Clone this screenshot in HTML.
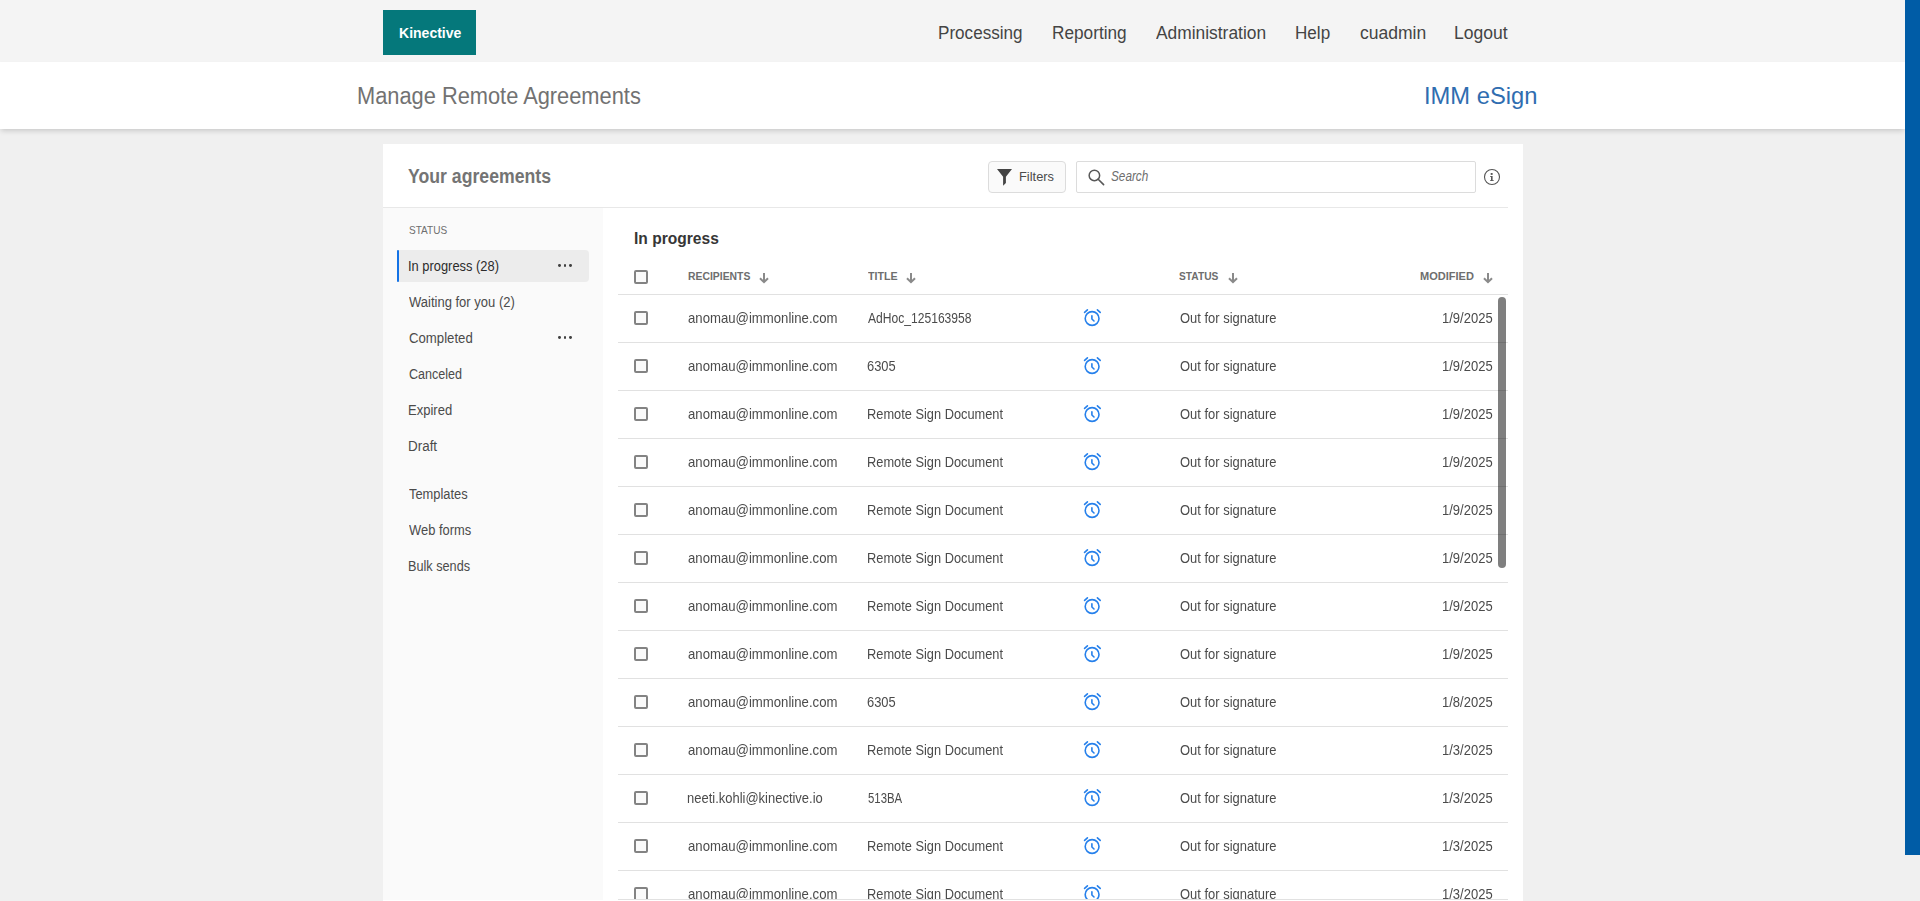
<!DOCTYPE html>
<html><head><meta charset="utf-8"><title>Manage Remote Agreements</title>
<style>
html,body{margin:0;padding:0;}
body{width:1920px;height:901px;overflow:hidden;background:#f0f0f0;position:relative;font-family:"Liberation Sans",sans-serif;}
.t{position:absolute;white-space:nowrap;line-height:1;}
.r{position:absolute;}
.clip{position:absolute;overflow:hidden;will-change:transform;}
</style></head><body>
<div class="r" style="left:0px;top:0px;width:1905px;height:62px;background:#f4f4f4;"></div>
<div class="r" style="left:0px;top:62px;width:1905px;height:67px;background:#ffffff;box-shadow:0 3px 5px -1px rgba(0,0,0,0.16);z-index:2;"></div>
<div class="r" style="left:1905px;top:0px;width:15px;height:855px;background:#005ca6;z-index:5;"></div>
<div class="r" style="left:383px;top:10px;width:93px;height:45px;background:#05787b;"></div>
<div class="t" style="top:24px;line-height:17px;font-size:15.5px;color:#ffffff;font-weight:bold;transform:scaleX(0.9050);transform-origin:left center;left:398.59px;z-index:3;">Kinective</div>
<div class="t" style="top:23px;line-height:20px;font-size:17.5px;color:#444444;transform:scaleX(0.9774);transform-origin:left center;left:938.23px;">Processing</div>
<div class="t" style="top:23px;line-height:20px;font-size:17.5px;color:#444444;transform:scaleX(0.9836);transform-origin:left center;left:1051.82px;">Reporting</div>
<div class="t" style="top:23px;line-height:20px;font-size:17.5px;color:#444444;transform:scaleX(0.9927);transform-origin:left center;left:1156.20px;">Administration</div>
<div class="t" style="top:23px;line-height:20px;font-size:17.5px;color:#444444;transform:scaleX(0.9764);transform-origin:left center;left:1295.03px;">Help</div>
<div class="t" style="top:23px;line-height:20px;font-size:17.5px;color:#444444;transform:scaleX(1.0016);transform-origin:left center;left:1359.50px;">cuadmin</div>
<div class="t" style="top:23px;line-height:20px;font-size:17.5px;color:#444444;transform:scaleX(1.0019);transform-origin:left center;left:1453.80px;">Logout</div>
<div class="t" style="top:83px;line-height:26px;font-size:23.5px;color:#727272;transform:scaleX(0.9284);transform-origin:left center;left:356.84px;z-index:3;">Manage Remote Agreements</div>
<div class="t" style="top:82px;line-height:27px;font-size:24px;color:#2f6db0;transform:scaleX(0.9892);transform-origin:left center;left:1424.22px;z-index:3;">IMM eSign</div>
<div class="r" style="left:383px;top:144px;width:1140px;height:757px;background:#ffffff;"></div>
<div class="r" style="left:383px;top:207px;width:1125px;height:1px;background:#e8e8e8;"></div>
<div class="t" style="top:165px;line-height:22px;font-size:19.5px;color:#747474;font-weight:bold;transform:scaleX(0.9062);transform-origin:left center;left:408.39px;">Your agreements</div>
<div class="r" style="left:988px;top:161px;width:78px;height:32px;background:#fafafa;box-sizing:border-box;border:1px solid #dcdcdc;border-radius:4px;"></div>
<svg class="r" style="left:996px;top:168px" width="18" height="19" viewBox="0 0 18 19"><path d="M1 1.1 H16 L9.9 8.8 V14.9 L7.1 17.7 V8.8 Z" fill="#444"/></svg>
<div class="t" style="top:169px;line-height:15px;font-size:13.5px;color:#4b4b4b;transform:scaleX(0.9517);transform-origin:left center;left:1019.45px;">Filters</div>
<div class="r" style="left:1076px;top:161px;width:400px;height:32px;background:#ffffff;box-sizing:border-box;border:1px solid #dcdcdc;border-radius:2px;"></div>
<svg class="r" style="left:1086px;top:167px" width="20" height="20" viewBox="0 0 20 20"><circle cx="8.4" cy="8.4" r="5.25" fill="none" stroke="#585858" stroke-width="1.5"/><path d="M12.2 12.2 L17.6 17.6" stroke="#585858" stroke-width="1.6" stroke-linecap="round"/></svg>
<div class="t" style="top:168px;line-height:16px;font-size:14px;color:#6e6e6e;font-style:italic;transform:scaleX(0.8410);transform-origin:left center;left:1111.36px;">Search</div>
<svg class="r" style="left:1483px;top:168px" width="18" height="18" viewBox="0 0 18 18"><circle cx="9" cy="9" r="7.5" fill="none" stroke="#555" stroke-width="1.1"/><rect x="7.7" y="5" width="1.9" height="1.9" fill="#555"/><path d="M7 8 H9.6 V12.2 H10.8 V13 H7 V12.2 H8 V8.8 H7 Z" fill="#555"/></svg>
<div class="r" style="left:383px;top:208px;width:220px;height:692px;background:#fafafa;"></div>
<div class="t" style="top:224px;line-height:12px;font-size:11.5px;color:#6e6e6e;transform:scaleX(0.8735);transform-origin:left center;left:408.76px;">STATUS</div>
<div class="r" style="left:397px;top:250px;width:192px;height:32px;background:#ececec;border-radius:0 4px 4px 0;"></div>
<div class="r" style="left:397px;top:250px;width:2px;height:32px;background:#1473e6;border-radius:1px;"></div>
<div class="t" style="top:258px;line-height:16px;font-size:14px;color:#2c2c2c;transform:scaleX(0.9204);transform-origin:left center;left:408.00px;">In progress (28)</div>
<div class="t" style="top:294px;line-height:16px;font-size:14px;color:#4b4b4b;transform:scaleX(0.9291);transform-origin:left center;left:409.11px;">Waiting for you (2)</div>
<div class="t" style="top:330px;line-height:16px;font-size:14px;color:#4b4b4b;transform:scaleX(0.9410);transform-origin:left center;left:408.54px;">Completed</div>
<div class="t" style="top:366px;line-height:16px;font-size:14px;color:#4b4b4b;transform:scaleX(0.8976);transform-origin:left center;left:408.57px;">Canceled</div>
<div class="t" style="top:402px;line-height:16px;font-size:14px;color:#4b4b4b;transform:scaleX(0.9297);transform-origin:left center;left:408.18px;">Expired</div>
<div class="t" style="top:438px;line-height:16px;font-size:14px;color:#4b4b4b;transform:scaleX(0.9588);transform-origin:left center;left:408.15px;">Draft</div>
<div class="t" style="top:486px;line-height:16px;font-size:14px;color:#4b4b4b;transform:scaleX(0.9190);transform-origin:left center;left:408.92px;">Templates</div>
<div class="t" style="top:522px;line-height:16px;font-size:14px;color:#4b4b4b;transform:scaleX(0.9222);transform-origin:left center;left:409.11px;">Web forms</div>
<div class="t" style="top:558px;line-height:16px;font-size:14px;color:#4b4b4b;transform:scaleX(0.9058);transform-origin:left center;left:408.20px;">Bulk sends</div>
<div class="r" style="left:558.1px;top:264.3px;width:2.8px;height:2.8px;border-radius:50%;background:#404040"></div>
<div class="r" style="left:563.6px;top:264.3px;width:2.8px;height:2.8px;border-radius:50%;background:#404040"></div>
<div class="r" style="left:569.1px;top:264.3px;width:2.8px;height:2.8px;border-radius:50%;background:#404040"></div>
<div class="r" style="left:558.1px;top:336.3px;width:2.8px;height:2.8px;border-radius:50%;background:#404040"></div>
<div class="r" style="left:563.6px;top:336.3px;width:2.8px;height:2.8px;border-radius:50%;background:#404040"></div>
<div class="r" style="left:569.1px;top:336.3px;width:2.8px;height:2.8px;border-radius:50%;background:#404040"></div>
<div class="t" style="top:229px;line-height:19px;font-size:17px;color:#363636;font-weight:bold;transform:scaleX(0.9163);transform-origin:left center;left:633.79px;">In progress</div>
<div class="r" style="left:634px;top:270px;width:14px;height:14px;box-sizing:border-box;border:2px solid #838383;border-radius:2px;background:#fafafa"></div>
<div class="t" style="top:270px;line-height:12px;font-size:11px;color:#6e6e6e;font-weight:bold;transform:scaleX(0.9445);transform-origin:left center;left:687.74px;">RECIPIENTS</div>
<svg class="r" style="left:759px;top:272px" width="10" height="12" viewBox="0 0 10 12"><path d="M5 1 V10" fill="none" stroke="#8a8a8a" stroke-width="2"/><path d="M1.7 6.9 L5 10.2 L8.3 6.9" fill="none" stroke="#8a8a8a" stroke-width="2" stroke-linecap="square"/></svg>
<div class="t" style="top:270px;line-height:12px;font-size:11px;color:#6e6e6e;font-weight:bold;transform:scaleX(0.9700);transform-origin:left center;left:868.10px;">TITLE</div>
<svg class="r" style="left:906px;top:272px" width="10" height="12" viewBox="0 0 10 12"><path d="M5 1 V10" fill="none" stroke="#8a8a8a" stroke-width="2"/><path d="M1.7 6.9 L5 10.2 L8.3 6.9" fill="none" stroke="#8a8a8a" stroke-width="2" stroke-linecap="square"/></svg>
<div class="t" style="top:270px;line-height:12px;font-size:11px;color:#6e6e6e;font-weight:bold;transform:scaleX(0.9279);transform-origin:left center;left:1179.42px;">STATUS</div>
<svg class="r" style="left:1228px;top:272px" width="10" height="12" viewBox="0 0 10 12"><path d="M5 1 V10" fill="none" stroke="#8a8a8a" stroke-width="2"/><path d="M1.7 6.9 L5 10.2 L8.3 6.9" fill="none" stroke="#8a8a8a" stroke-width="2" stroke-linecap="square"/></svg>
<div class="t" style="top:270px;line-height:12px;font-size:11px;color:#6e6e6e;font-weight:bold;transform:scaleX(1.0019);transform-origin:left center;left:1419.90px;">MODIFIED</div>
<svg class="r" style="left:1483px;top:272px" width="10" height="12" viewBox="0 0 10 12"><path d="M5 1 V10" fill="none" stroke="#8a8a8a" stroke-width="2"/><path d="M1.7 6.9 L5 10.2 L8.3 6.9" fill="none" stroke="#8a8a8a" stroke-width="2" stroke-linecap="square"/></svg>
<div class="r" style="left:618px;top:294px;width:890px;height:1px;background:#e1e1e1;"></div>
<div class="clip" style="left:0;top:295px;width:1920px;height:604px;">
<div class="r" style="left:634px;top:16px;width:14px;height:14px;box-sizing:border-box;border:2px solid #838383;border-radius:2px;background:#fafafa"></div>
<div class="t" style="top:16px;line-height:15px;font-size:13.75px;color:#4b4b4b;transform:scaleX(0.9571);transform-origin:left center;left:687.73px;">anomau@immonline.com</div>
<div class="t" style="top:16px;line-height:15px;font-size:13.75px;color:#4b4b4b;transform:scaleX(0.8792);transform-origin:left center;left:868.00px;">AdHoc_125163958</div>
<svg class="r" style="left:1082px;top:13px" width="21" height="21" viewBox="0 0 21 21"><circle cx="10.1" cy="10.5" r="6.9" fill="none" stroke="#2680eb" stroke-width="1.6"/><path d="M2.6 4.4 L5.4 1.9 M15.4 1.9 L18.2 4.4" stroke="#2680eb" stroke-width="1.6" stroke-linecap="round"/><path d="M9.9 7.7 V11 L12.0 13.0" fill="none" stroke="#2680eb" stroke-width="1.6" stroke-linecap="round" stroke-linejoin="round"/></svg>
<div class="t" style="top:16px;line-height:15px;font-size:13.75px;color:#4b4b4b;transform:scaleX(0.9425);transform-origin:left center;left:1179.63px;">Out for signature</div>
<div class="t" style="top:16px;line-height:15px;font-size:13.75px;color:#4b4b4b;transform:scaleX(0.9459);transform-origin:left center;left:1442.05px;">1/9/2025</div>
<div class="r" style="left:618px;top:47px;width:890px;height:1px;background:#e1e1e1;"></div>
<div class="r" style="left:634px;top:64px;width:14px;height:14px;box-sizing:border-box;border:2px solid #838383;border-radius:2px;background:#fafafa"></div>
<div class="t" style="top:64px;line-height:15px;font-size:13.75px;color:#4b4b4b;transform:scaleX(0.9571);transform-origin:left center;left:687.73px;">anomau@immonline.com</div>
<div class="t" style="top:64px;line-height:15px;font-size:13.75px;color:#4b4b4b;transform:scaleX(0.9386);transform-origin:left center;left:867.34px;">6305</div>
<svg class="r" style="left:1082px;top:61px" width="21" height="21" viewBox="0 0 21 21"><circle cx="10.1" cy="10.5" r="6.9" fill="none" stroke="#2680eb" stroke-width="1.6"/><path d="M2.6 4.4 L5.4 1.9 M15.4 1.9 L18.2 4.4" stroke="#2680eb" stroke-width="1.6" stroke-linecap="round"/><path d="M9.9 7.7 V11 L12.0 13.0" fill="none" stroke="#2680eb" stroke-width="1.6" stroke-linecap="round" stroke-linejoin="round"/></svg>
<div class="t" style="top:64px;line-height:15px;font-size:13.75px;color:#4b4b4b;transform:scaleX(0.9425);transform-origin:left center;left:1179.63px;">Out for signature</div>
<div class="t" style="top:64px;line-height:15px;font-size:13.75px;color:#4b4b4b;transform:scaleX(0.9459);transform-origin:left center;left:1442.05px;">1/9/2025</div>
<div class="r" style="left:618px;top:95px;width:890px;height:1px;background:#e1e1e1;"></div>
<div class="r" style="left:634px;top:112px;width:14px;height:14px;box-sizing:border-box;border:2px solid #838383;border-radius:2px;background:#fafafa"></div>
<div class="t" style="top:112px;line-height:15px;font-size:13.75px;color:#4b4b4b;transform:scaleX(0.9571);transform-origin:left center;left:687.73px;">anomau@immonline.com</div>
<div class="t" style="top:112px;line-height:15px;font-size:13.75px;color:#4b4b4b;transform:scaleX(0.9320);transform-origin:left center;left:866.97px;">Remote Sign Document</div>
<svg class="r" style="left:1082px;top:109px" width="21" height="21" viewBox="0 0 21 21"><circle cx="10.1" cy="10.5" r="6.9" fill="none" stroke="#2680eb" stroke-width="1.6"/><path d="M2.6 4.4 L5.4 1.9 M15.4 1.9 L18.2 4.4" stroke="#2680eb" stroke-width="1.6" stroke-linecap="round"/><path d="M9.9 7.7 V11 L12.0 13.0" fill="none" stroke="#2680eb" stroke-width="1.6" stroke-linecap="round" stroke-linejoin="round"/></svg>
<div class="t" style="top:112px;line-height:15px;font-size:13.75px;color:#4b4b4b;transform:scaleX(0.9425);transform-origin:left center;left:1179.63px;">Out for signature</div>
<div class="t" style="top:112px;line-height:15px;font-size:13.75px;color:#4b4b4b;transform:scaleX(0.9459);transform-origin:left center;left:1442.05px;">1/9/2025</div>
<div class="r" style="left:618px;top:143px;width:890px;height:1px;background:#e1e1e1;"></div>
<div class="r" style="left:634px;top:160px;width:14px;height:14px;box-sizing:border-box;border:2px solid #838383;border-radius:2px;background:#fafafa"></div>
<div class="t" style="top:160px;line-height:15px;font-size:13.75px;color:#4b4b4b;transform:scaleX(0.9571);transform-origin:left center;left:687.73px;">anomau@immonline.com</div>
<div class="t" style="top:160px;line-height:15px;font-size:13.75px;color:#4b4b4b;transform:scaleX(0.9320);transform-origin:left center;left:866.97px;">Remote Sign Document</div>
<svg class="r" style="left:1082px;top:157px" width="21" height="21" viewBox="0 0 21 21"><circle cx="10.1" cy="10.5" r="6.9" fill="none" stroke="#2680eb" stroke-width="1.6"/><path d="M2.6 4.4 L5.4 1.9 M15.4 1.9 L18.2 4.4" stroke="#2680eb" stroke-width="1.6" stroke-linecap="round"/><path d="M9.9 7.7 V11 L12.0 13.0" fill="none" stroke="#2680eb" stroke-width="1.6" stroke-linecap="round" stroke-linejoin="round"/></svg>
<div class="t" style="top:160px;line-height:15px;font-size:13.75px;color:#4b4b4b;transform:scaleX(0.9425);transform-origin:left center;left:1179.63px;">Out for signature</div>
<div class="t" style="top:160px;line-height:15px;font-size:13.75px;color:#4b4b4b;transform:scaleX(0.9459);transform-origin:left center;left:1442.05px;">1/9/2025</div>
<div class="r" style="left:618px;top:191px;width:890px;height:1px;background:#e1e1e1;"></div>
<div class="r" style="left:634px;top:208px;width:14px;height:14px;box-sizing:border-box;border:2px solid #838383;border-radius:2px;background:#fafafa"></div>
<div class="t" style="top:208px;line-height:15px;font-size:13.75px;color:#4b4b4b;transform:scaleX(0.9571);transform-origin:left center;left:687.73px;">anomau@immonline.com</div>
<div class="t" style="top:208px;line-height:15px;font-size:13.75px;color:#4b4b4b;transform:scaleX(0.9320);transform-origin:left center;left:866.97px;">Remote Sign Document</div>
<svg class="r" style="left:1082px;top:205px" width="21" height="21" viewBox="0 0 21 21"><circle cx="10.1" cy="10.5" r="6.9" fill="none" stroke="#2680eb" stroke-width="1.6"/><path d="M2.6 4.4 L5.4 1.9 M15.4 1.9 L18.2 4.4" stroke="#2680eb" stroke-width="1.6" stroke-linecap="round"/><path d="M9.9 7.7 V11 L12.0 13.0" fill="none" stroke="#2680eb" stroke-width="1.6" stroke-linecap="round" stroke-linejoin="round"/></svg>
<div class="t" style="top:208px;line-height:15px;font-size:13.75px;color:#4b4b4b;transform:scaleX(0.9425);transform-origin:left center;left:1179.63px;">Out for signature</div>
<div class="t" style="top:208px;line-height:15px;font-size:13.75px;color:#4b4b4b;transform:scaleX(0.9459);transform-origin:left center;left:1442.05px;">1/9/2025</div>
<div class="r" style="left:618px;top:239px;width:890px;height:1px;background:#e1e1e1;"></div>
<div class="r" style="left:634px;top:256px;width:14px;height:14px;box-sizing:border-box;border:2px solid #838383;border-radius:2px;background:#fafafa"></div>
<div class="t" style="top:256px;line-height:15px;font-size:13.75px;color:#4b4b4b;transform:scaleX(0.9571);transform-origin:left center;left:687.73px;">anomau@immonline.com</div>
<div class="t" style="top:256px;line-height:15px;font-size:13.75px;color:#4b4b4b;transform:scaleX(0.9320);transform-origin:left center;left:866.97px;">Remote Sign Document</div>
<svg class="r" style="left:1082px;top:253px" width="21" height="21" viewBox="0 0 21 21"><circle cx="10.1" cy="10.5" r="6.9" fill="none" stroke="#2680eb" stroke-width="1.6"/><path d="M2.6 4.4 L5.4 1.9 M15.4 1.9 L18.2 4.4" stroke="#2680eb" stroke-width="1.6" stroke-linecap="round"/><path d="M9.9 7.7 V11 L12.0 13.0" fill="none" stroke="#2680eb" stroke-width="1.6" stroke-linecap="round" stroke-linejoin="round"/></svg>
<div class="t" style="top:256px;line-height:15px;font-size:13.75px;color:#4b4b4b;transform:scaleX(0.9425);transform-origin:left center;left:1179.63px;">Out for signature</div>
<div class="t" style="top:256px;line-height:15px;font-size:13.75px;color:#4b4b4b;transform:scaleX(0.9459);transform-origin:left center;left:1442.05px;">1/9/2025</div>
<div class="r" style="left:618px;top:287px;width:890px;height:1px;background:#e1e1e1;"></div>
<div class="r" style="left:634px;top:304px;width:14px;height:14px;box-sizing:border-box;border:2px solid #838383;border-radius:2px;background:#fafafa"></div>
<div class="t" style="top:304px;line-height:15px;font-size:13.75px;color:#4b4b4b;transform:scaleX(0.9571);transform-origin:left center;left:687.73px;">anomau@immonline.com</div>
<div class="t" style="top:304px;line-height:15px;font-size:13.75px;color:#4b4b4b;transform:scaleX(0.9320);transform-origin:left center;left:866.97px;">Remote Sign Document</div>
<svg class="r" style="left:1082px;top:301px" width="21" height="21" viewBox="0 0 21 21"><circle cx="10.1" cy="10.5" r="6.9" fill="none" stroke="#2680eb" stroke-width="1.6"/><path d="M2.6 4.4 L5.4 1.9 M15.4 1.9 L18.2 4.4" stroke="#2680eb" stroke-width="1.6" stroke-linecap="round"/><path d="M9.9 7.7 V11 L12.0 13.0" fill="none" stroke="#2680eb" stroke-width="1.6" stroke-linecap="round" stroke-linejoin="round"/></svg>
<div class="t" style="top:304px;line-height:15px;font-size:13.75px;color:#4b4b4b;transform:scaleX(0.9425);transform-origin:left center;left:1179.63px;">Out for signature</div>
<div class="t" style="top:304px;line-height:15px;font-size:13.75px;color:#4b4b4b;transform:scaleX(0.9459);transform-origin:left center;left:1442.05px;">1/9/2025</div>
<div class="r" style="left:618px;top:335px;width:890px;height:1px;background:#e1e1e1;"></div>
<div class="r" style="left:634px;top:352px;width:14px;height:14px;box-sizing:border-box;border:2px solid #838383;border-radius:2px;background:#fafafa"></div>
<div class="t" style="top:352px;line-height:15px;font-size:13.75px;color:#4b4b4b;transform:scaleX(0.9571);transform-origin:left center;left:687.73px;">anomau@immonline.com</div>
<div class="t" style="top:352px;line-height:15px;font-size:13.75px;color:#4b4b4b;transform:scaleX(0.9320);transform-origin:left center;left:866.97px;">Remote Sign Document</div>
<svg class="r" style="left:1082px;top:349px" width="21" height="21" viewBox="0 0 21 21"><circle cx="10.1" cy="10.5" r="6.9" fill="none" stroke="#2680eb" stroke-width="1.6"/><path d="M2.6 4.4 L5.4 1.9 M15.4 1.9 L18.2 4.4" stroke="#2680eb" stroke-width="1.6" stroke-linecap="round"/><path d="M9.9 7.7 V11 L12.0 13.0" fill="none" stroke="#2680eb" stroke-width="1.6" stroke-linecap="round" stroke-linejoin="round"/></svg>
<div class="t" style="top:352px;line-height:15px;font-size:13.75px;color:#4b4b4b;transform:scaleX(0.9425);transform-origin:left center;left:1179.63px;">Out for signature</div>
<div class="t" style="top:352px;line-height:15px;font-size:13.75px;color:#4b4b4b;transform:scaleX(0.9459);transform-origin:left center;left:1442.05px;">1/9/2025</div>
<div class="r" style="left:618px;top:383px;width:890px;height:1px;background:#e1e1e1;"></div>
<div class="r" style="left:634px;top:400px;width:14px;height:14px;box-sizing:border-box;border:2px solid #838383;border-radius:2px;background:#fafafa"></div>
<div class="t" style="top:400px;line-height:15px;font-size:13.75px;color:#4b4b4b;transform:scaleX(0.9571);transform-origin:left center;left:687.73px;">anomau@immonline.com</div>
<div class="t" style="top:400px;line-height:15px;font-size:13.75px;color:#4b4b4b;transform:scaleX(0.9386);transform-origin:left center;left:867.34px;">6305</div>
<svg class="r" style="left:1082px;top:397px" width="21" height="21" viewBox="0 0 21 21"><circle cx="10.1" cy="10.5" r="6.9" fill="none" stroke="#2680eb" stroke-width="1.6"/><path d="M2.6 4.4 L5.4 1.9 M15.4 1.9 L18.2 4.4" stroke="#2680eb" stroke-width="1.6" stroke-linecap="round"/><path d="M9.9 7.7 V11 L12.0 13.0" fill="none" stroke="#2680eb" stroke-width="1.6" stroke-linecap="round" stroke-linejoin="round"/></svg>
<div class="t" style="top:400px;line-height:15px;font-size:13.75px;color:#4b4b4b;transform:scaleX(0.9425);transform-origin:left center;left:1179.63px;">Out for signature</div>
<div class="t" style="top:400px;line-height:15px;font-size:13.75px;color:#4b4b4b;transform:scaleX(0.9459);transform-origin:left center;left:1442.05px;">1/8/2025</div>
<div class="r" style="left:618px;top:431px;width:890px;height:1px;background:#e1e1e1;"></div>
<div class="r" style="left:634px;top:448px;width:14px;height:14px;box-sizing:border-box;border:2px solid #838383;border-radius:2px;background:#fafafa"></div>
<div class="t" style="top:448px;line-height:15px;font-size:13.75px;color:#4b4b4b;transform:scaleX(0.9571);transform-origin:left center;left:687.73px;">anomau@immonline.com</div>
<div class="t" style="top:448px;line-height:15px;font-size:13.75px;color:#4b4b4b;transform:scaleX(0.9320);transform-origin:left center;left:866.97px;">Remote Sign Document</div>
<svg class="r" style="left:1082px;top:445px" width="21" height="21" viewBox="0 0 21 21"><circle cx="10.1" cy="10.5" r="6.9" fill="none" stroke="#2680eb" stroke-width="1.6"/><path d="M2.6 4.4 L5.4 1.9 M15.4 1.9 L18.2 4.4" stroke="#2680eb" stroke-width="1.6" stroke-linecap="round"/><path d="M9.9 7.7 V11 L12.0 13.0" fill="none" stroke="#2680eb" stroke-width="1.6" stroke-linecap="round" stroke-linejoin="round"/></svg>
<div class="t" style="top:448px;line-height:15px;font-size:13.75px;color:#4b4b4b;transform:scaleX(0.9425);transform-origin:left center;left:1179.63px;">Out for signature</div>
<div class="t" style="top:448px;line-height:15px;font-size:13.75px;color:#4b4b4b;transform:scaleX(0.9459);transform-origin:left center;left:1442.05px;">1/3/2025</div>
<div class="r" style="left:618px;top:479px;width:890px;height:1px;background:#e1e1e1;"></div>
<div class="r" style="left:634px;top:496px;width:14px;height:14px;box-sizing:border-box;border:2px solid #838383;border-radius:2px;background:#fafafa"></div>
<div class="t" style="top:496px;line-height:15px;font-size:13.75px;color:#4b4b4b;transform:scaleX(0.9436);transform-origin:left center;left:687.45px;">neeti.kohli@kinective.io</div>
<div class="t" style="top:496px;line-height:15px;font-size:13.75px;color:#4b4b4b;transform:scaleX(0.8272);transform-origin:left center;left:867.50px;">513BA</div>
<svg class="r" style="left:1082px;top:493px" width="21" height="21" viewBox="0 0 21 21"><circle cx="10.1" cy="10.5" r="6.9" fill="none" stroke="#2680eb" stroke-width="1.6"/><path d="M2.6 4.4 L5.4 1.9 M15.4 1.9 L18.2 4.4" stroke="#2680eb" stroke-width="1.6" stroke-linecap="round"/><path d="M9.9 7.7 V11 L12.0 13.0" fill="none" stroke="#2680eb" stroke-width="1.6" stroke-linecap="round" stroke-linejoin="round"/></svg>
<div class="t" style="top:496px;line-height:15px;font-size:13.75px;color:#4b4b4b;transform:scaleX(0.9425);transform-origin:left center;left:1179.63px;">Out for signature</div>
<div class="t" style="top:496px;line-height:15px;font-size:13.75px;color:#4b4b4b;transform:scaleX(0.9459);transform-origin:left center;left:1442.05px;">1/3/2025</div>
<div class="r" style="left:618px;top:527px;width:890px;height:1px;background:#e1e1e1;"></div>
<div class="r" style="left:634px;top:544px;width:14px;height:14px;box-sizing:border-box;border:2px solid #838383;border-radius:2px;background:#fafafa"></div>
<div class="t" style="top:544px;line-height:15px;font-size:13.75px;color:#4b4b4b;transform:scaleX(0.9571);transform-origin:left center;left:687.73px;">anomau@immonline.com</div>
<div class="t" style="top:544px;line-height:15px;font-size:13.75px;color:#4b4b4b;transform:scaleX(0.9320);transform-origin:left center;left:866.97px;">Remote Sign Document</div>
<svg class="r" style="left:1082px;top:541px" width="21" height="21" viewBox="0 0 21 21"><circle cx="10.1" cy="10.5" r="6.9" fill="none" stroke="#2680eb" stroke-width="1.6"/><path d="M2.6 4.4 L5.4 1.9 M15.4 1.9 L18.2 4.4" stroke="#2680eb" stroke-width="1.6" stroke-linecap="round"/><path d="M9.9 7.7 V11 L12.0 13.0" fill="none" stroke="#2680eb" stroke-width="1.6" stroke-linecap="round" stroke-linejoin="round"/></svg>
<div class="t" style="top:544px;line-height:15px;font-size:13.75px;color:#4b4b4b;transform:scaleX(0.9425);transform-origin:left center;left:1179.63px;">Out for signature</div>
<div class="t" style="top:544px;line-height:15px;font-size:13.75px;color:#4b4b4b;transform:scaleX(0.9459);transform-origin:left center;left:1442.05px;">1/3/2025</div>
<div class="r" style="left:618px;top:575px;width:890px;height:1px;background:#e1e1e1;"></div>
<div class="r" style="left:634px;top:592px;width:14px;height:14px;box-sizing:border-box;border:2px solid #838383;border-radius:2px;background:#fafafa"></div>
<div class="t" style="top:592px;line-height:15px;font-size:13.75px;color:#4b4b4b;transform:scaleX(0.9571);transform-origin:left center;left:687.73px;">anomau@immonline.com</div>
<div class="t" style="top:592px;line-height:15px;font-size:13.75px;color:#4b4b4b;transform:scaleX(0.9320);transform-origin:left center;left:866.97px;">Remote Sign Document</div>
<svg class="r" style="left:1082px;top:589px" width="21" height="21" viewBox="0 0 21 21"><circle cx="10.1" cy="10.5" r="6.9" fill="none" stroke="#2680eb" stroke-width="1.6"/><path d="M2.6 4.4 L5.4 1.9 M15.4 1.9 L18.2 4.4" stroke="#2680eb" stroke-width="1.6" stroke-linecap="round"/><path d="M9.9 7.7 V11 L12.0 13.0" fill="none" stroke="#2680eb" stroke-width="1.6" stroke-linecap="round" stroke-linejoin="round"/></svg>
<div class="t" style="top:592px;line-height:15px;font-size:13.75px;color:#4b4b4b;transform:scaleX(0.9425);transform-origin:left center;left:1179.63px;">Out for signature</div>
<div class="t" style="top:592px;line-height:15px;font-size:13.75px;color:#4b4b4b;transform:scaleX(0.9459);transform-origin:left center;left:1442.05px;">1/3/2025</div>
<div class="r" style="left:618px;top:623px;width:890px;height:1px;background:#e1e1e1;"></div>
</div>
<div class="r" style="left:618px;top:899px;width:890px;height:1px;background:#e1e1e1;"></div>
<div class="r" style="left:383px;top:900px;width:1125px;height:1px;background:#ffffff;"></div>
<div class="r" style="left:1498px;top:297px;width:8px;height:271px;background:rgba(0,0,0,0.5);border-radius:4px;z-index:4;"></div>
</body></html>
